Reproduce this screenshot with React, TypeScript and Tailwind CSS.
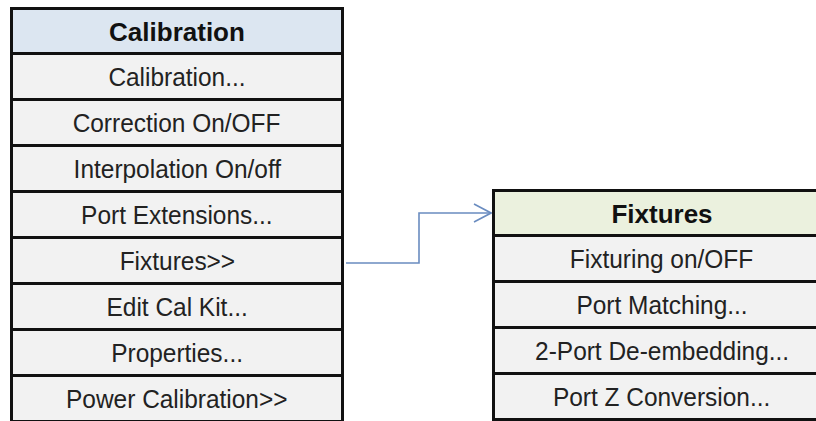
import React from "react";

const calibrationItems = [
  "Calibration...",
  "Correction On/OFF",
  "Interpolation On/off",
  "Port Extensions...",
  "Fixtures>>",
  "Edit Cal Kit...",
  "Properties...",
  "Power Calibration>>",
];

const fixtureItems = [
  "Fixturing on/OFF",
  "Port Matching...",
  "2-Port De-embedding...",
  "Port Z Conversion...",
];

const MenuTable = ({
  title,
  items,
  headerBg,
  className,
}: {
  title: string;
  items: string[];
  headerBg: string;
  className: string;
}) => (
  <div className={`shrink-0 border-[3px] border-b-0 border-[#111] ${className}`}>
    <div
      className={`h-[45px] pt-[3px] flex items-center justify-center border-b-[3px] border-[#111] font-bold text-[26px] text-[#111] ${headerBg}`}
    >
      {title}
    </div>
    {items.map((item) => (
      <div
        key={item}
        className="h-[46px] pt-[2px] flex items-center justify-center border-b-[3px] border-[#111] bg-[#f2f2f2] text-[26px] text-[#222]"
      >
        <span className="inline-block whitespace-nowrap scale-x-[0.94]">{item}</span>
      </div>
    ))}
  </div>
);

export default function App() {
  return (
    <div
      className="w-[816px] h-[421px] overflow-hidden bg-white flex items-start"
      style={{ fontFamily: '"Liberation Sans", Arial, sans-serif' }}
    >
      <MenuTable
        title="Calibration"
        items={calibrationItems}
        headerBg="bg-[#dce6f1]"
        className="w-[334px] ml-[10px] mt-[7px]"
      />

      {/* connector arrow */}
      <svg className="shrink-0 w-[148px] h-[80px] mt-[195px]" viewBox="0 0 148 80" fill="none">
        <polyline
          points="2,68 75,68 75,18 147,18"
          stroke="#6a8cc0"
          strokeWidth="1.6"
        />
        <polyline points="130,9 147,18 130,27" stroke="#6a8cc0" strokeWidth="1.6" />
      </svg>

      <MenuTable
        title="Fixtures"
        items={fixtureItems}
        headerBg="bg-[#ebf1de]"
        className="w-[340px] mt-[189px]"
      />
    </div>
  );
}
